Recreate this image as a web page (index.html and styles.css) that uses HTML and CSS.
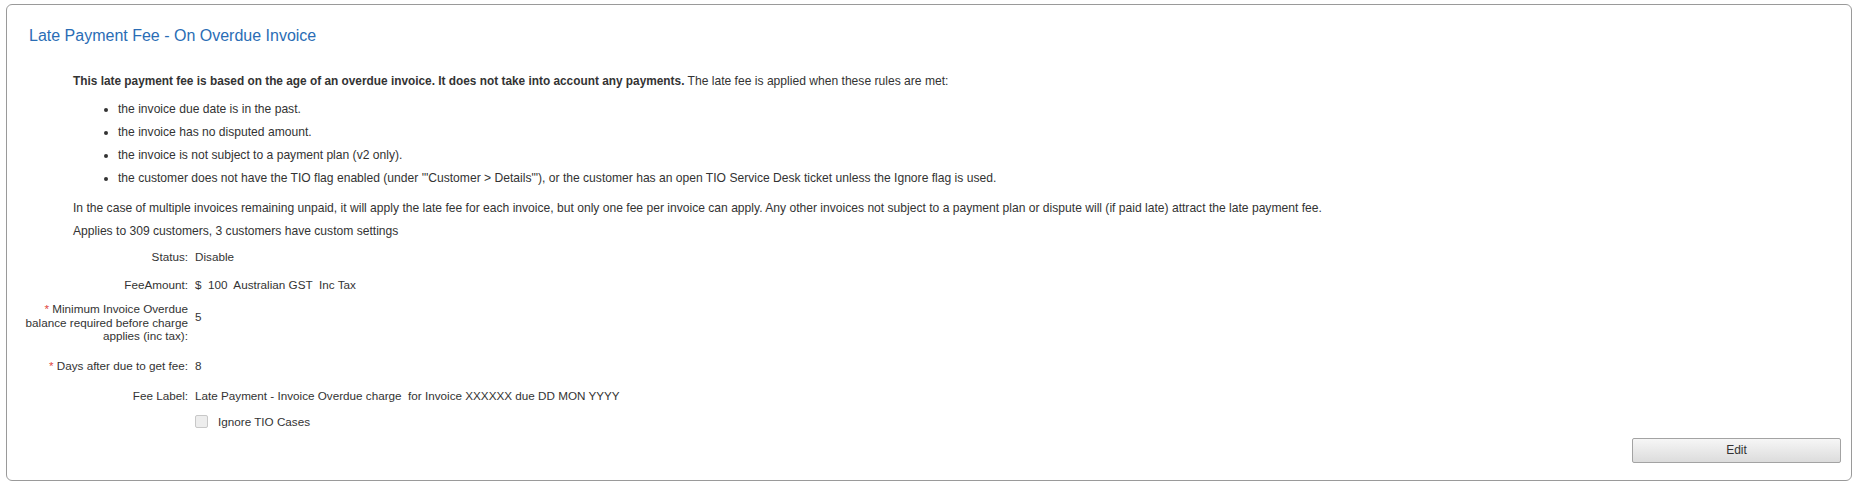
FILE: index.html
```html
<!DOCTYPE html>
<html>
  <head>
    <link rel="stylesheet" href="styles.css">
  </head>
  <body>
    <div class="panel">
      <div class="panel-title">Late Payment Fee - On Overdue Invoice</div>
      <div class="intro">
        <p><b>This late payment fee is based on the age of an overdue invoice. It does not take into account any payments.</b> The late fee is applied when these rules are met:</p>
        <ul>
          <li>the invoice due date is in the past.</li>
          <li>the invoice has no disputed amount.</li>
          <li>the invoice is not subject to a payment plan (v2 only).</li>
          <li>the customer does not have the TIO flag enabled (under '"Customer &gt; Details"'), or the customer has an open TIO Service Desk ticket unless the Ignore flag is used.</li>
        </ul>
        <p class="after-list">In the case of multiple invoices remaining unpaid, it will apply the late fee for each invoice, but only one fee per invoice can apply. Any other invoices not subject to a payment plan or dispute will (if paid late) attract the late payment fee.</p>
        <p>Applies to 309 customers, 3 customers have custom settings</p>
      </div>
      <div class="fields">
        <div class="field">
          <div class="field-label">Status:</div>
          <div class="field-value">Disable</div>
        </div>
        <div class="field">
          <div class="field-label">FeeAmount:</div>
          <div class="field-value">$&nbsp; 100&nbsp; Australian GST&nbsp; Inc Tax</div>
        </div>
        <div class="field tight">
          <div class="field-label multi required">Minimum Invoice Overdue balance required before charge applies (inc tax):</div>
          <div class="field-value drop">5</div>
        </div>
        <div class="field wide">
          <div class="field-label required">Days after due to get fee:</div>
          <div class="field-value">8</div>
        </div>
        <div class="field mid">
          <div class="field-label">Fee Label:</div>
          <div class="field-value">Late Payment - Invoice Overdue charge&nbsp; for Invoice XXXXXX due DD MON YYYY</div>
        </div>
        <div class="field check-row">
          <div class="field-label"></div>
          <label class="field-value check"><span class="box"></span>Ignore TIO Cases</label>
        </div>
      </div>
      <div class="actions">
        <button class="btn">Edit</button>
      </div>
    </div>
  </body>
</html>
```

FILE: styles.css
```css
body {margin: 0; background-color: #fff; font-family: "Liberation Sans", Arial, sans-serif; font-size: 12px; color: #333}

.panel {margin: 4px 7px 0 6px; padding: 0 10px 17px 22px; border: 1px solid #9a9a9a; border-radius: 6px}
.panel-title {margin-top: 21px; font-size: 16px; line-height: 20px; color: #2a6db5}

.intro {margin: 24px 0 0 44px; font-size: 12.1px}
.intro b {font-size: 11.85px}
.intro p {margin: 0; line-height: 23px}
.intro ul {margin: 5px 0 0 0; padding-left: 45px}
.intro li {line-height: 23px}
.intro .after-list {margin-top: 7px}

/* form rows - label column is right aligned */
.fields {margin: 6px 0 0 -6px; font-size: 11.7px}
.field {display: flex; align-items: flex-start; margin-top: 12px; line-height: 16px}
.field:first-child {margin-top: 0}
.field.tight {margin-top: 9px}
.field.wide {margin-top: 15px}
.field.mid {margin-top: 14px}
.field.check-row {margin-top: 10px}
.field-label {width: 165px; flex: none; text-align: right}
.field-label.multi {line-height: 13.5px}
.field-label.required::before {content: "* "; color: #e0443c}
.field-value {padding-left: 7px}
.field-value.drop {padding-top: 6.5px}

.check {display: flex; align-items: center}
.box {width: 11px; height: 11px; margin-right: 10px; border: 1px solid #c8c8c8; border-radius: 2px; background-color: #ededed}

.actions {display: flex; justify-content: flex-end; margin-top: 8px}
.btn {width: 209px; height: 25px; padding: 0; border: 1px solid #a3a3a3; border-radius: 2px; background: linear-gradient(#f6f6f6, #dcdcdc); font-family: "Liberation Sans", Arial, sans-serif; font-size: 12px; color: #333}
```
